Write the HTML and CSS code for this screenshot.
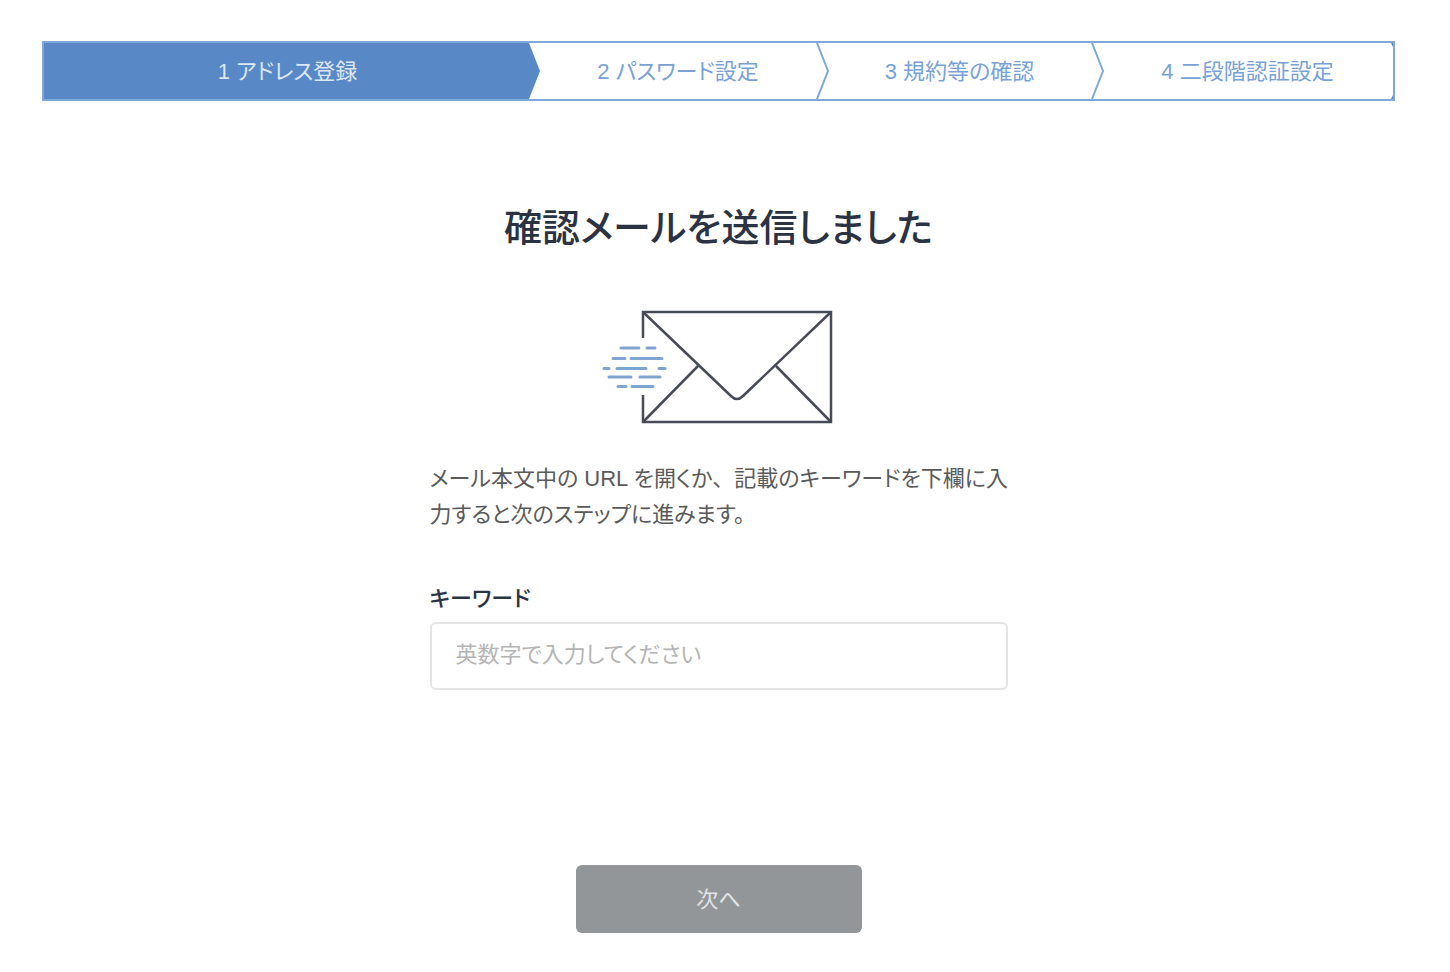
FILE: index.html
```html
<!DOCTYPE html>
<html lang="ja">
<head>
<meta charset="UTF-8">
<meta name="viewport" content="width=device-width, initial-scale=1.0">
<title>確認メールを送信しました</title>
<link rel="stylesheet" href="styles.css">
</head>
<body>
<div class="wrap">
    <ol class="steps">
        <li class="step current" aria-current="step">1 アドレス登録
            <svg class="arrow" viewBox="0 0 14 56" aria-hidden="true"><path class="fill" d="M0 0H1L12 28L1 56H0Z"/></svg>
        </li>
        <li class="step">2 パスワード設定
            <svg class="arrow" viewBox="0 0 14 56" aria-hidden="true"><path d="M1 0L12 28L1 56"/></svg>
        </li>
        <li class="step">3 規約等の確認
            <svg class="arrow" viewBox="0 0 14 56" aria-hidden="true"><path d="M1 0L12 28L1 56"/></svg>
        </li>
        <li class="step">4 二段階認証設定
            <svg class="corner" viewBox="0 0 4 56" aria-hidden="true"><path class="fill" d="M2 0H4V4ZM4 52V56H2Z"/></svg>
        </li>
    </ol>

    <main class="main">
        <h1>確認メールを送信しました</h1>
        <svg class="mail" viewBox="0 0 234 114" aria-hidden="true">
            <g class="envelope">
                <path d="M41 28V2H229V112H41V85"/>
                <path d="M41 2L129 86Q135 92 141 86L229 2"/>
                <path d="M41 112L96 56M229 112L174 56"/>
            </g>
            <g class="speed">
                <path d="M19 38H37M45 38H53"/>
                <path d="M11 48.500H23M29 48.500H60"/>
                <path d="M2 58.500H7M15 58.500H44M57 58.500H63"/>
                <path d="M7 67H29M38 67H58"/>
                <path d="M16 76.500H24M30 76.500H51"/>
            </g>
        </svg>
        <form class="form">
            <p>メール本文中の URL を開くか<span class="comma">、</span>記載のキーワードを下欄に入力すると次のステップに進みます。</p>
            <label for="keyword">キーワード</label>
            <input type="text" id="keyword" placeholder="英数字で入力してください">
            <button type="button">次へ</button>
        </form>
    </main>
</div>
</body>
</html>
```
FILE: styles.css
```css
*{margin: 0; padding: 0; box-sizing: border-box;}
body{
    background: #fff;
    color: #5a5a5a;
    font-family: "Liberation Sans", "Noto Sans CJK JP", sans-serif;
    font-size: 22px;
    font-feature-settings: "palt";
}
.wrap{
    padding: 41px 55px 38px 42px;
}
/* ステップ */
.steps{
    display: grid;
    grid-template-columns: 485fr 288fr 275fr 301fr;
    height: 60px;
    border: 2px solid #7fa8d9;
    list-style: none;
    color: #78a2d6;
}
.step{
    position: relative;
    height: 56px;
    padding-left: 10px;
    line-height: 58px;
    text-align: center;
    white-space: nowrap;
}
.current{
    padding-left: 2px;
    background: #5889c6;
    color: #dce7f4;
}
.arrow{
    position: absolute;
    left: 100%;
    top: 0;
    width: 14px;
    height: 56px;
    margin-left: -1px;
    fill: none;
    stroke: #7fa8d9;
    stroke-width: 2;
}
.corner{
    position: absolute;
    right: 0;
    top: 0;
    width: 4px;
    height: 56px;
}
.fill{
    fill: #5889c6;
    stroke: none;
}
/* 本文 */
.main{
    display: flex;
    flex-direction: column;
    align-items: center;
    padding-top: 97px;
}
h1{
    color: #2b3242;
    font-size: 38px;
    font-weight: 500;
    line-height: 60px;
}
.mail{
    width: 234px;
    height: 114px;
    margin-top: 52px;
    fill: none;
}
.envelope{
    stroke: #464b57;
    stroke-width: 2.5;
}
.speed{
    stroke: #7ea4d2;
    stroke-width: 3;
    stroke-linecap: round;
}
.form{
    display: flex;
    flex-direction: column;
    width: 578px;
    max-width: 100%;
    margin-top: 37px;
}
p{
    margin-right: -6px;
    line-height: 36px;
}
.comma{
    font-feature-settings: normal;
}
label{
    margin-top: 48px;
    color: #2b3242;
    font-weight: 500;
    line-height: 36px;
}
input{
    height: 68px;
    margin-top: 5px;
    padding: 0 24px 2px;
    border: 2px solid #e4e4e4;
    border-radius: 6px;
    color: #5a5a5a;
    font: inherit;
    font-feature-settings: inherit;
}
input::placeholder{
    color: #b4b4b4;
}
button{
    align-self: center;
    width: 286px;
    height: 68px;
    margin-top: 175px;
    padding-bottom: 4px;
    border: 0;
    border-radius: 6px;
    background: #929699;
    color: #e2e4e5;
    font: inherit;
    font-feature-settings: inherit;
}
```
